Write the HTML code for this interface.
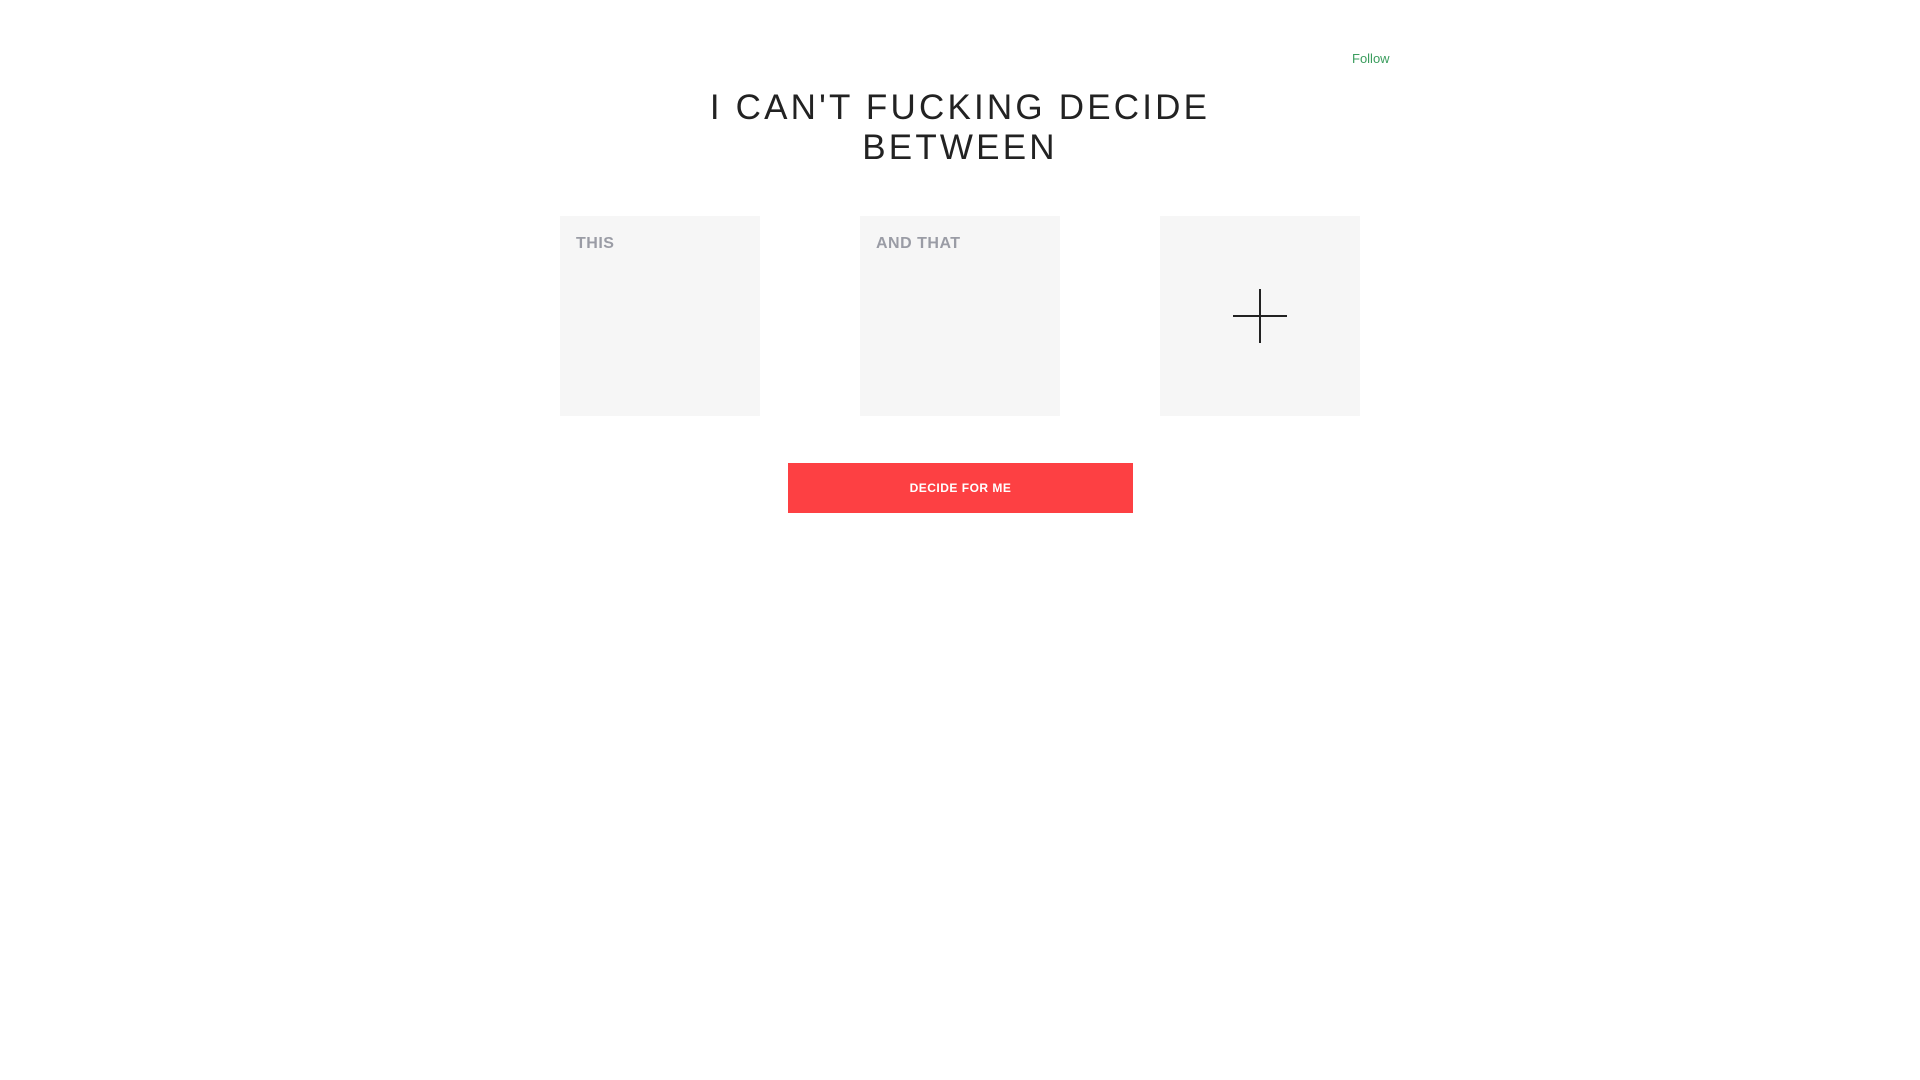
<!DOCTYPE html>
<html><head><style>
body{margin:0;width:1920px;height:1080px;background:#fff;font-family:"Liberation Sans",sans-serif;position:relative;overflow:hidden}
.follow{position:absolute;left:1352px;top:51px;font-size:13px;color:#3a9d5d}
h1{position:absolute;left:0;width:1920px;top:88px;margin:0;text-align:center;font-weight:normal;font-size:35px;line-height:40px;letter-spacing:3.2px;color:#222}
.card{position:absolute;top:216px;width:200px;height:200px;background:#f6f6f6}
.card span{position:absolute;left:16px;top:19px;font-size:16px;font-weight:bold;color:#9a9ca5;letter-spacing:.5px}
.h{position:absolute;left:73px;top:99px;width:54px;height:1.5px;background:#222}
.v{position:absolute;left:99px;top:73px;width:1.5px;height:54px;background:#222}
.btn{position:absolute;left:788px;top:463px;width:345px;height:50px;background:#fd4043;color:#fff;font-size:12px;font-weight:bold;text-align:center;line-height:50px;letter-spacing:.5px}
</style></head><body>
<div class="follow">Follow</div>
<h1>I CAN'T FUCKING DECIDE<br>BETWEEN</h1>
<div class="card" style="left:560px"><span>THIS</span></div>
<div class="card" style="left:860px"><span>AND THAT</span></div>
<div class="card" style="left:1160px"><div class="h"></div><div class="v"></div></div>
<div class="btn">DECIDE FOR ME</div>
</body></html>
